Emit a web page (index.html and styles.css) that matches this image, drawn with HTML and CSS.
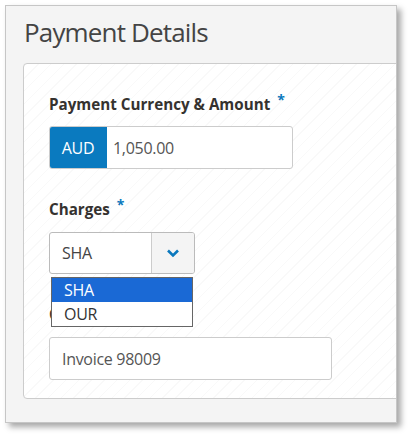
FILE: index.html
```html
<!DOCTYPE html>
<html>
<head>
<meta charset="utf-8">
<link rel="stylesheet" href="styles.css">
</head>
<body>
<div class="panel">
  <h1 class="title">Payment Details</h1>
  <div class="card">
    <div class="field">
      <label class="label">Payment Currency &amp; Amount <span class="req">*</span></label>
      <div class="input-group">
        <span class="addon">AUD</span>
        <span class="input-text">1,050.00</span>
      </div>
    </div>
    <div class="field">
      <label class="label">Charges <span class="req">*</span></label>
      <div class="select-wrap">
        <div class="select">
          <span class="select-value">SHA</span>
          <span class="select-btn">
            <svg width="14" height="10" viewBox="0 0 14 10"><path d="M2 2.5 L7 7.5 L12 2.5" fill="none" stroke="#0a78bd" stroke-width="2.6"/></svg>
          </span>
        </div>
        <ul class="options">
          <li class="option selected">SHA</li>
          <li class="option">OUR</li>
        </ul>
      </div>
    </div>
    <div class="field">
      <label class="label">Comments</label>
      <div class="input">Invoice 98009</div>
    </div>
  </div>
</div>
</body>
</html>
```
FILE: styles.css
```css
html, body {
  margin: 0;
  padding: 0;
  background: #ffffff;
}
body {
  font-family: "Open Sans", "Noto Sans", sans-serif;
  padding: 5px 0 0 5px;
  height: 436px;
  box-sizing: border-box;
  overflow: hidden;
}
.panel {
  width: 392px;
  height: 418px;
  box-sizing: border-box;
  border: 1px solid #c6c6c6;
  background: #f4f4f4;
  box-shadow: 4px 4px 6px rgba(0, 0, 0, 0.35);
  overflow: hidden;
  padding: 10px 0 0 17px;
  display: flex;
  flex-direction: column;
}
.title {
  margin: 0 0 15px 1px;
  font-size: 26px;
  line-height: 32px;
  font-weight: 400;
  color: #444444;
  letter-spacing: -0.85px;
}
.card {
  width: 420px;
  height: 336px;
  box-sizing: border-box;
  border: 1px solid #cccccc;
  border-radius: 4px;
  background-color: #ffffff;
  background-image: repeating-linear-gradient(-45deg, #ffffff 0px, #ffffff 8px, #f9f9f9 8px, #f9f9f9 9px);
  padding: 30px 0 0 25px;
  display: flex;
  flex-direction: column;
  gap: 30px;
}
.field {
  display: flex;
  flex-direction: column;
  align-items: flex-start;
}
.label {
  font-size: 15.2px;
  line-height: 20px;
  font-weight: 700;
  color: #35322f;
  margin-bottom: 12px;
  letter-spacing: 0;
}
.req {
  color: #0a78bd;
  font-size: 14px;
  font-weight: 700;
  vertical-align: 5px;
  line-height: 0;
  margin-left: 3px;
}
.input-group {
  display: flex;
  width: 244px;
  height: 43px;
  box-sizing: border-box;
  border: 1px solid #cccccc;
  border-radius: 3px;
  background: #ffffff;
  overflow: hidden;
}
.addon {
  width: 58px;
  background: #0a7abf;
  color: #ffffff;
  font-size: 16px;
  display: flex;
  align-items: center;
  justify-content: center;
  margin: -1px 0 -1px -1px;
  letter-spacing: -0.3px;
}
.input-text {
  display: flex;
  align-items: center;
  padding-left: 6px;
  font-size: 16px;
  color: #555555;
  letter-spacing: -0.3px;
}
.select-wrap {
  position: relative;
  margin-top: 1px;
}
.select {
  display: flex;
  width: 146px;
  height: 42px;
  box-sizing: border-box;
  border: 1px solid #bbbbbb;
  border-radius: 3px;
  background: #ffffff;
  overflow: hidden;
}
.select-value {
  flex: 1;
  display: flex;
  align-items: center;
  padding-left: 12px;
  font-size: 16px;
  color: #444444;
  letter-spacing: -0.3px;
}
.select-btn {
  width: 42px;
  border-left: 1px solid #cccccc;
  background: #f4f4f4;
  display: flex;
  align-items: center;
  justify-content: center;
}
.options {
  position: absolute;
  top: 45px;
  left: 2px;
  width: 142px;
  margin: 0;
  padding: 0;
  list-style: none;
  box-sizing: border-box;
  border: 1px solid #666666;
  background: #ffffff;
  z-index: 2;
}
.option {
  height: 24px;
  line-height: 24px;
  padding-left: 12px;
  font-size: 16px;
  color: #333333;
  letter-spacing: -0.3px;
}
.option.selected {
  background: #1a69d5;
  color: #ffffff;
}
.input {
  width: 283px;
  height: 43px;
  box-sizing: border-box;
  border: 1px solid #cccccc;
  border-radius: 3px;
  background: #ffffff;
  display: flex;
  align-items: center;
  padding-left: 12px;
  font-size: 16px;
  color: #555555;
  letter-spacing: -0.3px;
}
.field:last-child .label {
  margin-bottom: 13px;
}
```
